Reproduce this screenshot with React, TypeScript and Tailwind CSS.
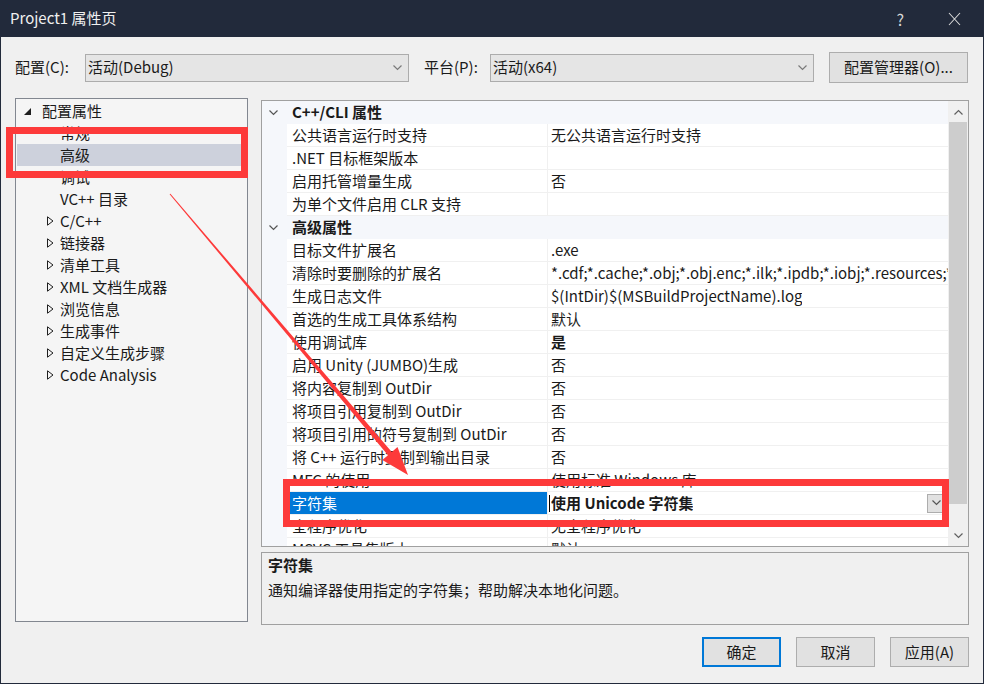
import React from "react";

// 属性页对话框：标题栏 + 配置行 + 左侧树 / 右侧属性网格 + 说明区 + 按钮
const TREE = [
  { label: "常规", arrow: false },
  { label: "高级", arrow: false, selected: true },
  { label: "调试", arrow: false },
  { label: "VC++ 目录", arrow: false },
  { label: "C/C++", arrow: true },
  { label: "链接器", arrow: true },
  { label: "清单工具", arrow: true },
  { label: "XML 文档生成器", arrow: true },
  { label: "浏览信息", arrow: true },
  { label: "生成事件", arrow: true },
  { label: "自定义生成步骤", arrow: true },
  { label: "Code Analysis", arrow: true },
];

type Row = { name: string; value: string; bold?: boolean; selected?: boolean };

const SECTIONS: { title: string; rows: Row[] }[] = [
  {
    title: "C++/CLI 属性",
    rows: [
      { name: "公共语言运行时支持", value: "无公共语言运行时支持" },
      { name: ".NET 目标框架版本", value: "" },
      { name: "启用托管增量生成", value: "否" },
      { name: "为单个文件启用 CLR 支持", value: "" },
    ],
  },
  {
    title: "高级属性",
    rows: [
      { name: "目标文件扩展名", value: ".exe" },
      {
        name: "清除时要删除的扩展名",
        value: "*.cdf;*.cache;*.obj;*.obj.enc;*.ilk;*.ipdb;*.iobj;*.resources;*.tlb;*.tli;*.tlh;*.tmp",
      },
      { name: "生成日志文件", value: "$(IntDir)$(MSBuildProjectName).log" },
      { name: "首选的生成工具体系结构", value: "默认" },
      { name: "使用调试库", value: "是", bold: true },
      { name: "启用 Unity (JUMBO)生成", value: "否" },
      { name: "将内容复制到 OutDir", value: "否" },
      { name: "将项目引用复制到 OutDir", value: "否" },
      { name: "将项目引用的符号复制到 OutDir", value: "否" },
      { name: "将 C++ 运行时复制到输出目录", value: "否" },
      { name: "MFC 的使用", value: "使用标准 Windows 库" },
      { name: "字符集", value: "使用 Unicode 字符集", bold: true, selected: true },
      { name: "全程序优化", value: "无全程序优化" },
      { name: "MSVC 工具集版本", value: "默认" },
    ],
  },
];

function Chevron({ up = false, className = "" }: { up?: boolean; className?: string }) {
  return (
    <svg width="9" height="6" viewBox="0 0 9 6" className={className}>
      <path
        d={up ? "M0.5 5.5 L4.5 1.5 L8.5 5.5" : "M0.5 0.5 L4.5 4.5 L8.5 0.5"}
        fill="none"
        stroke="currentColor"
        strokeWidth="1.2"
      />
    </svg>
  );
}

function Combo({ text, width }: { text: string; width: string }) {
  return (
    <div className={`${width} flex h-[28px] items-center justify-between border border-[#acacac] bg-[#e5e5e5] pl-[2px] pr-[6px]`}>
      <span className="text-[15px] text-[#1a1a1a]">{text}</span>
      <Chevron className="text-[#7a7a7a]" />
    </div>
  );
}

function Button({ label, primary = false }: { label: string; primary?: boolean }) {
  return (
    <div
      className={
        primary
          ? "flex h-[30px] w-[79px] items-center justify-center border-2 border-[#0078d7] bg-[#e1e1e1] text-[15px]"
          : "flex h-[30px] w-[79px] items-center justify-center border border-[#adadad] bg-[#e1e1e1] text-[15px]"
      }
    >
      {label}
    </div>
  );
}

export default function App() {
  return (
    <div className="relative h-[684px] w-[984px] overflow-hidden border-x border-b border-[#222a3b] bg-[#f0f0f0] font-['Noto_Sans_CJK_SC',sans-serif] text-[#1a1a1a]">
      {/* 标题栏 */}
      <div className="flex h-[37px] items-center bg-[#222a3b] pl-[9px] pr-[22px] text-[15px] text-[#f0f0f0]">
        <span>Project1 属性页</span>
        <span className="ml-auto mr-[44px] text-[16px] text-[#d8d8d8]">?</span>
        <svg width="13" height="14" viewBox="0 0 13 14">
          <path d="M1 1 L12 13 M12 1 L1 13" stroke="#d8d8d8" strokeWidth="1.1" fill="none" />
        </svg>
      </div>

      {/* 配置行 */}
      <div className="mt-[15px] flex h-[31px] items-center pl-[14px] text-[15px]">
        <span className="w-[70px]">配置(C):</span>
        <Combo text="活动(Debug)" width="w-[324px]" />
        <span className="ml-[15px] w-[66px]">平台(P):</span>
        <Combo text="活动(x64)" width="w-[324px]" />
        <div className="ml-[15px] flex h-[31px] w-[139px] items-center justify-center border border-[#adadad] bg-[#e1e1e1]">
          配置管理器(O)...
        </div>
      </div>

      <div className="mt-[15px] flex pl-[14px]">
        {/* 左侧树 */}
        <div className="h-[524px] w-[233px] border border-[#828790] bg-[#f5f5f5] pt-[1px] text-[15px]">
          <div className="flex h-[22px] items-center pl-[8px]">
            <svg width="7" height="7" viewBox="0 0 7 7">
              <path d="M7 0 L7 7 L0 7 Z" fill="#1e1e1e" />
            </svg>
            <span className="ml-[11px]">配置属性</span>
          </div>
          {TREE.map((t) => (
            <div
              key={t.label}
              className={
                t.selected
                  ? "ml-[1px] flex h-[22px] w-[224px] items-center bg-[#cdd1dc] pl-[30px]"
                  : "ml-[1px] flex h-[22px] w-[224px] items-center pl-[30px]"
              }
            >
              {t.arrow ? (
                <svg width="7" height="10" viewBox="0 0 7 10" className="shrink-0">
                  <path d="M0.5 0.8 L6 5 L0.5 9.2 Z" fill="none" stroke="#1e1e1e" strokeWidth="1" />
                </svg>
              ) : (
                <span className="w-[7px] shrink-0" />
              )}
              <span className="ml-[6px]">{t.label}</span>
            </div>
          ))}
        </div>

        {/* 右侧：属性网格 + 说明 */}
        <div className="ml-[13px] mt-[2px] flex w-[708px] flex-col">
          <div className="flex h-[447px] border border-[#a0a0a0] bg-white text-[15px]">
            <div className="flex-1 overflow-hidden">
              {SECTIONS.map((s) => (
                <div key={s.title}>
                  <div className="flex h-[23px] items-center bg-[#f5f7fb]">
                    <Chevron className="ml-[7px] text-[#555]" />
                    <span className="ml-[14px] font-bold">{s.title}</span>
                  </div>
                  {s.rows.map((r) => (
                    <div key={r.name} className="flex h-[23px]">
                      <div className="w-[25px] shrink-0 bg-[#f5f7fb]" />
                      <div
                        className={
                          r.selected
                            ? "flex w-[261px] shrink-0 items-center border-b border-r border-[#f0f0f0] bg-[#0078d7] pl-[5px] text-white"
                            : "flex w-[261px] shrink-0 items-center border-b border-r border-[#f0f0f0] pl-[5px]"
                        }
                      >
                        <span className="whitespace-nowrap">{r.name}</span>
                      </div>
                      <div className="flex min-w-0 flex-1 items-center border-b border-[#f0f0f0] pl-[3px]">
                        {r.selected ? <span className="-ml-[2px] mr-[1px] h-[17px] w-[1px] bg-black" /> : null}
                        <span className={r.bold ? "overflow-hidden whitespace-nowrap font-bold" : "overflow-hidden whitespace-nowrap"}>
                          {r.value}
                        </span>
                        {r.selected ? (
                          <div className="ml-auto mr-[2px] flex h-[19px] w-[19px] shrink-0 items-center justify-center border border-[#adadad] bg-[#e1e1e1]">
                            <Chevron className="text-[#555]" />
                          </div>
                        ) : null}
                      </div>
                    </div>
                  ))}
                </div>
              ))}
            </div>
            {/* 滚动条 */}
            <div className="flex w-[20px] shrink-0 flex-col bg-[#f0f0f0]">
              <div className="flex h-[21px] items-center justify-center">
                <Chevron up className="text-[#606060]" />
              </div>
              <div className="mx-[1px] h-[382px] bg-[#cdcdcd]" />
              <div className="flex flex-1 items-end justify-center pb-[7px]">
                <Chevron className="text-[#606060]" />
              </div>
            </div>
          </div>

          <div className="mt-[5px] h-[73px] border border-[#a0a0a0] bg-[#f0f0f0] px-[6px] pt-[1px] text-[15px]">
            <div className="h-[22px] font-bold leading-[22px]">字符集</div>
            <div className="mt-[3px] leading-[22px]">通知编译器使用指定的字符集；帮助解决本地化问题。</div>
          </div>
        </div>
      </div>

      {/* 底部按钮 */}
      <div className="mt-[12px] flex justify-end gap-[15px] pr-[14px]">
        <Button label="确定" primary />
        <Button label="取消" />
        <Button label="应用(A)" />
      </div>

      {/* 红色标注框和箭头（覆盖在界面上方） */}
      <div className="pointer-events-none absolute left-[5px] top-[127px] h-[51px] w-[242px] border-[7px] border-[#fd3a3a]" />
      <div className="pointer-events-none absolute left-[282px] top-[479px] h-[48px] w-[666px] border-[7px] border-[#fd3a3a]" />
      <svg className="pointer-events-none absolute left-[-1px] top-0" width="984" height="684" viewBox="0 0 984 684">
        <polygon
          points="170.4,193.7 391.8,452.0 397.5,447.1 408,475 382.3,460.1 388.0,455.2 169.6,194.3"
          fill="#fd3a3a"
        />
      </svg>
    </div>
  );
}
